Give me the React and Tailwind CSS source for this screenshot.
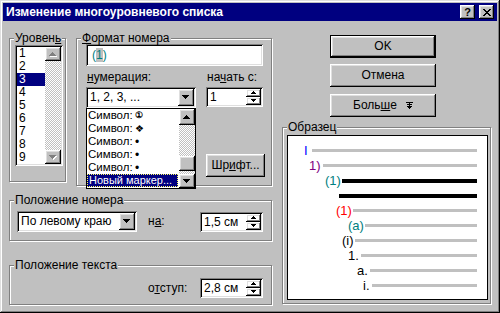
import React from "react";

const raised =
  "shadow-[inset_-1px_-1px_#000,inset_1px_1px_#fff,inset_-2px_-2px_#808080,inset_2px_2px_#dfdfdf]";
const sunken =
  "shadow-[inset_1px_1px_#808080,inset_-1px_-1px_#fff,inset_2px_2px_#000,inset_-2px_-2px_#dfdfdf]";
const etched = "border border-[#808080] shadow-[1px_1px_0_#fff,inset_1px_1px_0_#fff]";
const dither =
  "bg-[repeating-conic-gradient(#c0c0c0_0_25%,#fff_0_50%)] bg-[length:2px_2px]";

// pixel triangle, rows of n, n-2, ... 1
function Tri({ n = 7, up = false, color = "#000", disabled = false }) {
  const rows = (n + 1) / 2;
  const draw = (fill, dx, dy) =>
    Array.from({ length: rows }, (_, i) => (
      <rect
        key={`${fill}${i}`}
        x={i + dx}
        y={(up ? rows - 1 - i : i) + dy}
        width={n - 2 * i}
        height={1}
        fill={fill}
      />
    ));
  return (
    <svg width={n + 1} height={rows + 1} className="block" shapeRendering="crispEdges">
      {disabled && draw("#fff", 1, 1)}
      {draw(disabled ? "#808080" : color, 0, 0)}
    </svg>
  );
}

function ArrowBtn({ up, disabled, className = "" }) {
  return (
    <div className={`flex items-center justify-center bg-[#c0c0c0] ${raised} ${className}`}>
      <Tri up={up} disabled={disabled} />
    </div>
  );
}

function Legend({ children, className = "" }) {
  return (
    <div className={`-mt-[7px] ml-[4px] w-fit bg-[#c0c0c0] px-[1px] leading-[13px] ${className}`}>
      {children}
    </div>
  );
}

function Spin({ value, className = "" }) {
  return (
    <div className={`flex h-[20px] bg-white p-[2px] ${sunken} ${className}`}>
      <div className="flex-1 pl-[2px] leading-[16px]">{value}</div>
      <div className="flex w-[15px] flex-col">
        <div className={`flex flex-1 items-center justify-center ${raised}`}>
          <Tri n={5} up />
        </div>
        <div className={`flex flex-1 items-center justify-center ${raised}`}>
          <Tri n={5} />
        </div>
      </div>
    </div>
  );
}

function Combo({ value, className = "", children }) {
  return (
    <div className={`relative flex h-[21px] bg-white p-[2px] ${sunken} ${className}`}>
      <div className="flex-1 pl-[2px] leading-[17px]">{value}</div>
      <ArrowBtn className="w-[16px]" />
      {children}
    </div>
  );
}

function Button({ children, isDefault, className = "" }) {
  return (
    <div
      className={`flex items-center justify-center bg-[#c0c0c0] ${
        isDefault ? "border border-black" : ""
      } ${className}`}
    >
      <div className={`flex h-full w-full items-center justify-center ${raised}`}>{children}</div>
    </div>
  );
}

function TitleBar() {
  return (
    <div className="flex h-[18px] items-center bg-[#000080] pl-[3px] pr-[3px]">
      <span className="flex-1 text-[12px] font-bold leading-[18px] text-white">
        Изменение многоуровневого списка
      </span>
      <div className={`flex h-[14px] w-[15px] items-center justify-center bg-[#c0c0c0] ${raised}`}>
        <span className="text-[11px] font-bold leading-none">?</span>
      </div>
      <div
        className={`ml-[4px] flex h-[14px] w-[15px] items-center justify-center bg-[#c0c0c0] ${raised}`}
      >
        <svg width="8" height="7" shapeRendering="crispEdges">
          <path d="M0 0h2v1h1v1h2v-1h1v-1h2v1h-1v1h-1v1h-1v1h1v1h1v1h1v1h-2v-1h-1v-1h-2v1h-1v1h-2v-1h1v-1h1v-1h1v-1h-1v-1h-1v-1h-1z" fill="#000" />
        </svg>
      </div>
    </div>
  );
}

const dropItems = [
  { label: "Символ:", sym: "①", cls: "text-[9px] font-bold" },
  { label: "Символ:", sym: "❖", cls: "text-[10px]" },
  { label: "Символ:", sym: "•", cls: "text-[12px]" },
  { label: "Символ:", sym: "•", cls: "text-[12px]" },
  { label: "Символ:", sym: "•", cls: "text-[12px]" },
];

function DropList() {
  return (
    <div className="absolute left-0 top-full z-10 flex h-[81px] w-[110px] border border-black bg-white">
      <div className="flex flex-1 flex-col">
        {dropItems.map((it, i) => (
          <div key={i} className="flex h-[13px] items-center pl-[1px]">
            <span className="w-[47px] shrink-0 whitespace-nowrap text-[11.5px]">{it.label}</span>
            <span className={`leading-none ${it.cls}`}>{it.sym}</span>
          </div>
        ))}
        <div className="mr-[1px] h-[13px] whitespace-nowrap border border-dotted border-[#ffff60] bg-[#000080] pl-[1px] text-[11px] leading-[11px] text-white">
          Новый маркер...
        </div>
      </div>
      <div className="flex w-[16px] flex-col">
        <ArrowBtn up className="h-[16px]" />
        <div className={`flex flex-1 flex-col justify-end pb-[3px] ${dither}`}>
          <div className={`h-[15px] bg-[#c0c0c0] ${raised}`} />
        </div>
        <ArrowBtn className="h-[14px]" />
      </div>
    </div>
  );
}

const levels = ["1", "2", "3", "4", "5", "6", "7", "8", "9"];

function LeftColumn() {
  return (
    <div className="ml-[6px] w-[263px] pt-[17px]">
      <div className="flex items-start">
        <div className={`h-[144px] w-[57px] ${etched}`}>
          <Legend>
            Уровен<u>ь</u>
          </Legend>
          <div className={`ml-[5px] flex h-[121px] w-[48px] bg-white p-[2px] ${sunken}`}>
            <div className="flex flex-1 flex-col">
              {levels.map((l) => (
                <div
                  key={l}
                  className={`h-[13px] pl-[2px] leading-[13px] ${
                    l === "3" ? "bg-[#000080] text-white" : ""
                  }`}
                >
                  {l}
                </div>
              ))}
            </div>
            <div className="flex w-[16px] flex-col">
              <ArrowBtn up disabled className="h-[14px]" />
              <div className={`flex-1 ${dither}`} />
              <ArrowBtn disabled className="h-[14px]" />
            </div>
          </div>
        </div>

        <div className={`relative ml-[10px] h-[148px] w-[196px] ${etched}`}>
          <Legend>
            <u>Ф</u>ормат номера
          </Legend>
          <div className={`-mt-[1px] ml-[9px] flex h-[22px] w-[177px] items-center bg-white pl-[6px] ${sunken}`}>
            <span className="text-[#008080]">
              (<span className="bg-[#c0c0c0]">1</span>)
            </span>
          </div>
          <div className="ml-[9px] flex">
            <div className="w-[110px]">
              <div className="mt-[5px] pl-[1px]">
                <u>н</u>умерация:
              </div>
              <Combo value="1, 2, 3, ..." className="mt-[3px]">
                <DropList />
              </Combo>
            </div>
            <div className="ml-[10px] w-[59px]">
              <div className="mt-[5px] pl-[1px]">
                на<u>ч</u>ать с:
              </div>
              <Spin value="1" className="mt-[3px] w-[57px]" />
              <Button className="mt-[47px] h-[23px] w-[59px]">
                <span>
                  Шр<u>и</u>фт...
                </span>
              </Button>
            </div>
          </div>
        </div>
      </div>

      <div className={`mt-[14px] h-[41px] w-[263px] ${etched}`}>
        <Legend>Положение номера</Legend>
        <div className="mt-[4px] flex items-center">
          <Combo value="По левому краю" className="ml-[7px] w-[120px]" />
          <span className="ml-[11px] w-[52px]">
            н<u>а</u>:
          </span>
          <Spin value="1,5 см" className="w-[63px]" />
        </div>
      </div>

      <div className={`mt-[24px] h-[40px] w-[263px] ${etched}`}>
        <Legend>Положение текста</Legend>
        <div className="mt-[6px] flex items-center">
          <span className="ml-[138px] w-[52px]">
            о<u>т</u>ступ:
          </span>
          <Spin value="2,8 см" className="w-[63px]" />
        </div>
      </div>
    </div>
  );
}

const preview = [
  { text: "I", color: "text-[#0000ff]", left: 16, line: 24, dark: false },
  { text: "1)", color: "text-[#800080]", left: 21, line: 35, dark: false },
  { text: "(1)", color: "text-[#008080]", left: 37, line: 54, dark: true },
  { text: "", color: "", left: 51, line: 51, dark: true },
  { text: "(1)", color: "text-[#ff0000]", left: 48, line: 65, dark: false },
  { text: "(a)", color: "text-[#008080]", left: 60, line: 77, dark: false },
  { text: "(i)", color: "text-black", left: 54, line: 67, dark: false },
  { text: "1.", color: "text-black", left: 60, line: 73, dark: false },
  { text: "a.", color: "text-black", left: 69, line: 82, dark: false },
  { text: "i.", color: "text-black", left: 75, line: 84, dark: false },
];

function RightColumn() {
  return (
    <div className="ml-[10px] w-[209px] pt-[14px]">
      <Button isDefault className="ml-[48px] h-[23px] w-[106px]">
        OK
      </Button>
      <Button className="ml-[48px] mt-[6px] h-[23px] w-[106px]">Отмена</Button>
      <Button className="ml-[48px] mt-[7px] h-[23px] w-[106px]">
        <span>
          Боль<u>ш</u>е
        </span>
        <svg width="7" height="8" className="ml-[9px]" shapeRendering="crispEdges">
          <path d="M0 0h7v1h-7zM3 1h1v4h-1zM1 2h5v1h-5zM1 4h5v1h-5zM2 5h3v1h-3zM3 6h1v1h-1z" fill="#000" />
        </svg>
      </Button>

      <div className={`mt-[10px] h-[177px] w-[209px] ${etched}`}>
        <Legend>Образец</Legend>
        <div className="ml-[4px] mt-[1px] h-[165px] w-[201px] border border-black bg-white pr-[10px] pt-[7px]">
          {preview.map((r, i) => (
            <div key={i} className="flex h-[15px] items-center">
              <span
                className={`shrink-0 text-[13px] leading-[15px] ${r.color}`}
                style={{ marginLeft: r.left, width: r.line - r.left }}
              >
                {r.text}
              </span>
              <div className={`flex-1 ${r.dark ? "h-[4px] bg-black" : "h-[3px] bg-[#c0c0c0]"}`} />
            </div>
          ))}
        </div>
      </div>
    </div>
  );
}

export default function App() {
  return (
    <div className="h-[313px] w-[500px] overflow-hidden bg-[#c0c0c0] p-[3px] font-['Liberation_Sans',Arial,sans-serif] text-[12px] leading-[13px] text-black shadow-[inset_-1px_-1px_#000,inset_1px_1px_#dfdfdf,inset_-2px_-2px_#808080,inset_2px_2px_#fff]">
      <TitleBar />
      <div className="flex">
        <LeftColumn />
        <RightColumn />
      </div>
    </div>
  );
}
